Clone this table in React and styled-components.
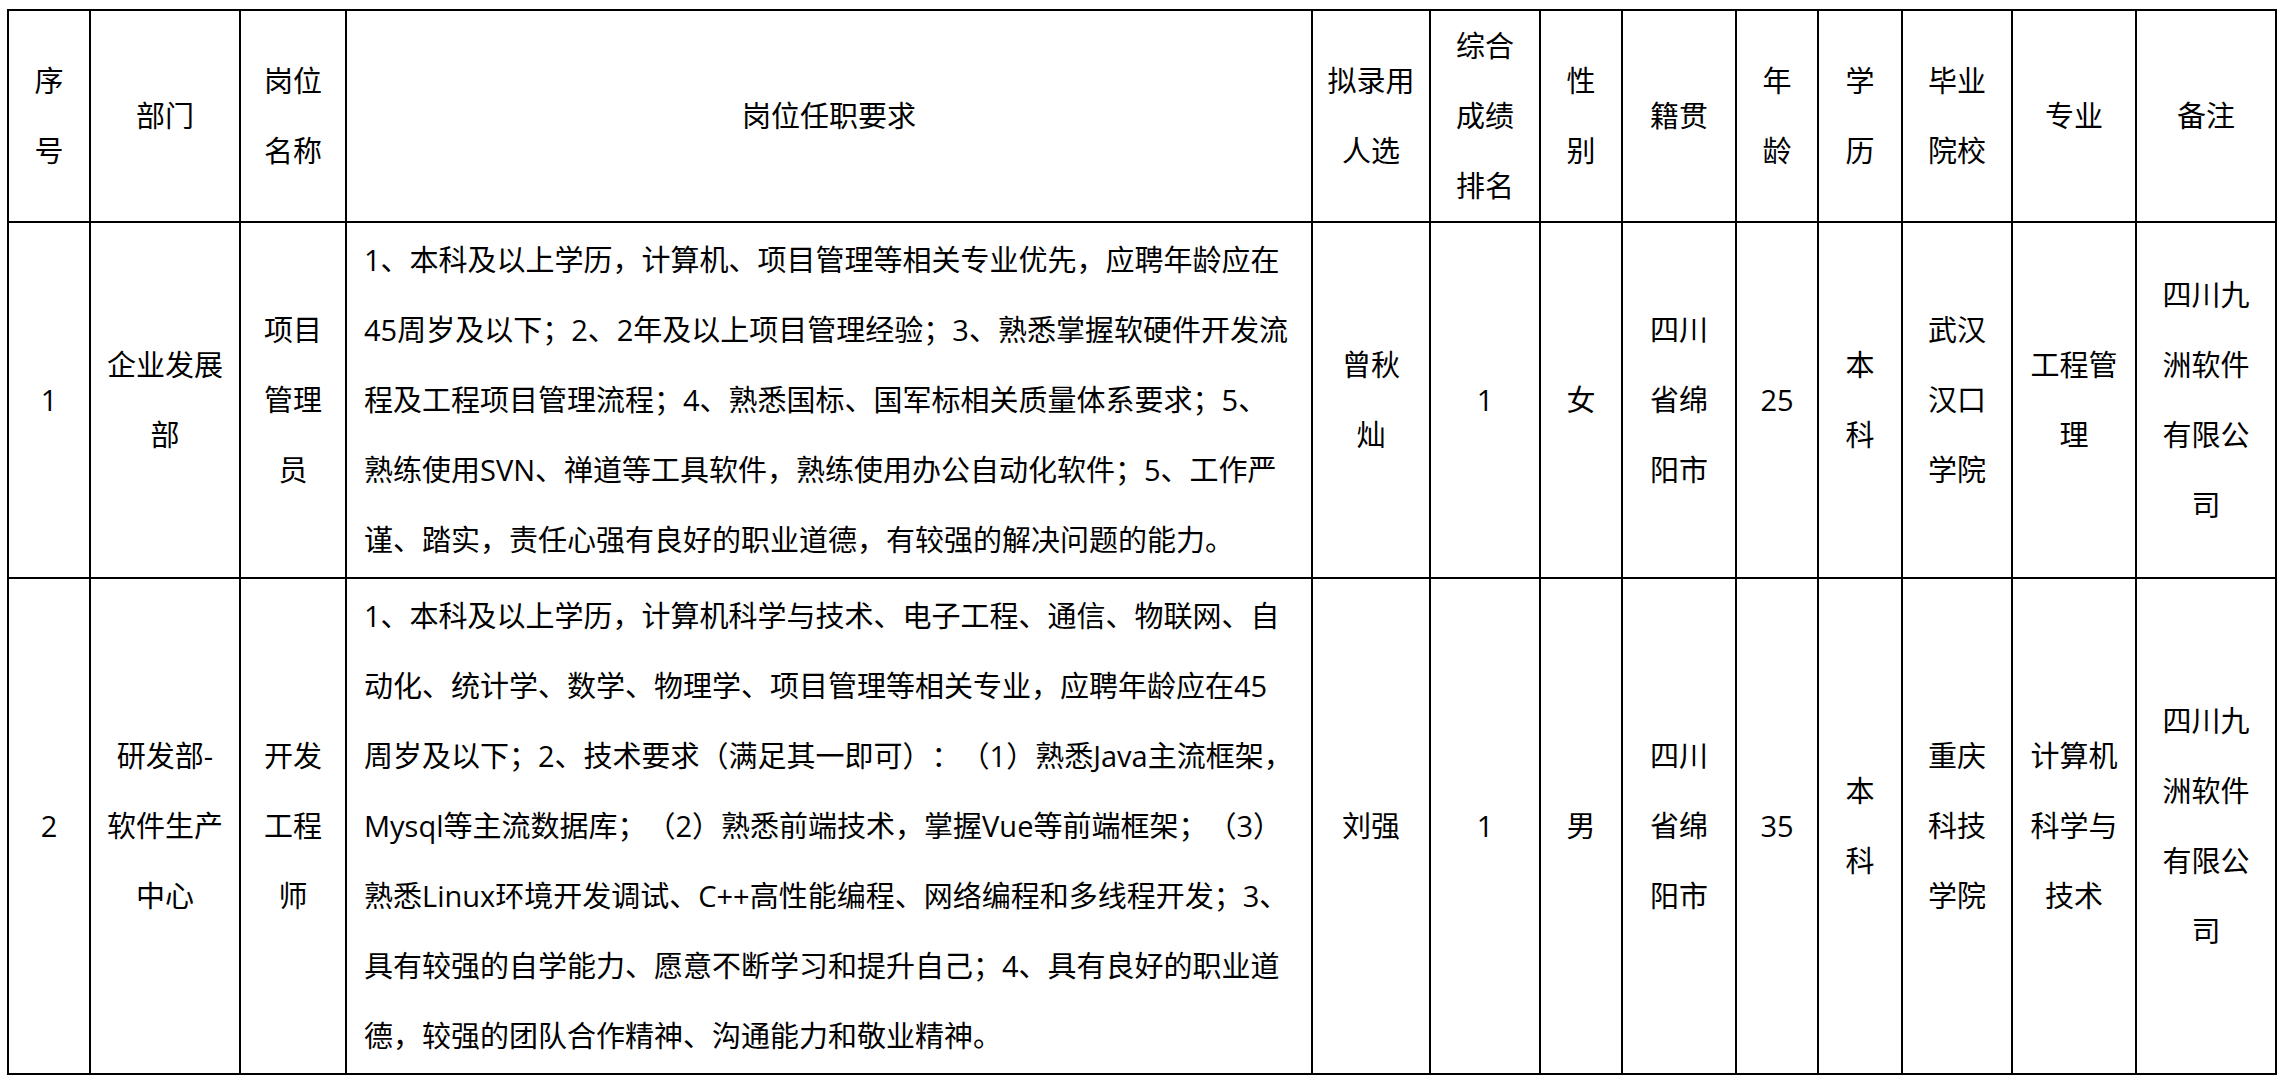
import React from "react";
import styled, { createGlobalStyle } from "styled-components";

const GlobalStyle = createGlobalStyle`
  html, body {
    margin: 0;
    padding: 0;
    background: #ffffff;
  }
  body {
    font-family: "Open Sans", "Noto Sans CJK SC", sans-serif;
    color: #000000;
    text-spacing-trim: space-all;
  }
`;

const Page = styled.div`
  padding: 9px 0 0 7px;
`;

const Table = styled.table`
  border-collapse: collapse;
  table-layout: fixed;
  width: 2268px;
  font-size: 29px;
  line-height: 70px;
  color: #000;
  text-spacing-trim: space-all;
`;

const Col = styled.col`
  width: ${(p) => p.$w}px;
`;

const Row = styled.tr`
  height: ${(p) => p.$h}px;
`;

const HeadCell = styled.th`
  border: 2px solid #000;
  padding: 0 6px;
  font-weight: 400;
  text-align: center;
  vertical-align: middle;
`;

const Cell = styled.td`
  border: 2px solid #000;
  padding: 0 6px;
  text-align: center;
  vertical-align: middle;
`;

const ReqCell = styled.td`
  border: 2px solid #000;
  padding: 0 10px 0 17px;
  text-align: left;
  vertical-align: middle;
`;

const Line = styled.span`
  display: block;
  white-space: nowrap;
  text-spacing-trim: space-all;
`;

const widths = [82, 150, 106, 966, 118, 110, 82, 114, 82, 84, 110, 124, 140];

const headers = [
  ["序", "号"],
  ["部门"],
  ["岗位", "名称"],
  ["岗位任职要求"],
  ["拟录用", "人选"],
  ["综合", "成绩", "排名"],
  ["性", "别"],
  ["籍贯"],
  ["年", "龄"],
  ["学", "历"],
  ["毕业", "院校"],
  ["专业"],
  ["备注"],
];

const rows = [
  {
    h: 356,
    before: [["1"], ["企业发展", "部"], ["项目", "管理", "员"]],
    req: [
      "1、本科及以上学历，计算机、项目管理等相关专业优先，应聘年龄应在",
      "45周岁及以下；2、2年及以上项目管理经验；3、熟悉掌握软硬件开发流",
      "程及工程项目管理流程；4、熟悉国标、国军标相关质量体系要求；5、",
      "熟练使用SVN、禅道等工具软件，熟练使用办公自动化软件；5、工作严",
      "谨、踏实，责任心强有良好的职业道德，有较强的解决问题的能力。",
    ],
    after: [
      ["曾秋", "灿"],
      ["1"],
      ["女"],
      ["四川", "省绵", "阳市"],
      ["25"],
      ["本", "科"],
      ["武汉", "汉口", "学院"],
      ["工程管", "理"],
      ["四川九", "洲软件", "有限公", "司"],
    ],
  },
  {
    h: 496,
    before: [["2"], ["研发部-", "软件生产", "中心"], ["开发", "工程", "师"]],
    req: [
      "1、本科及以上学历，计算机科学与技术、电子工程、通信、物联网、自",
      "动化、统计学、数学、物理学、项目管理等相关专业，应聘年龄应在45",
      "周岁及以下；2、技术要求（满足其一即可）：（1）熟悉Java主流框架，",
      "Mysql等主流数据库；（2）熟悉前端技术，掌握Vue等前端框架；（3）",
      "熟悉Linux环境开发调试、C++高性能编程、网络编程和多线程开发；3、",
      "具有较强的自学能力、愿意不断学习和提升自己；4、具有良好的职业道",
      "德，较强的团队合作精神、沟通能力和敬业精神。",
    ],
    after: [
      ["刘强"],
      ["1"],
      ["男"],
      ["四川", "省绵", "阳市"],
      ["35"],
      ["本", "科"],
      ["重庆", "科技", "学院"],
      ["计算机", "科学与", "技术"],
      ["四川九", "洲软件", "有限公", "司"],
    ],
  },
];

const Lines = ({ lines }) =>
  lines.map((l, i) => <Line key={i}>{l}</Line>);

export default function App() {
  return (
    <Page>
      <GlobalStyle />
      <Table>
        <colgroup>
          {widths.map((w, i) => (
            <Col key={i} $w={w} />
          ))}
        </colgroup>
        <thead>
          <Row $h={212}>
            {headers.map((h, i) => (
              <HeadCell key={i}>
                <Lines lines={h} />
              </HeadCell>
            ))}
          </Row>
        </thead>
        <tbody>
          {rows.map((r, ri) => (
            <Row key={ri} $h={r.h}>
              {r.before.map((c, i) => (
                <Cell key={"b" + i}>
                  <Lines lines={c} />
                </Cell>
              ))}
              <ReqCell>
                <Lines lines={r.req} />
              </ReqCell>
              {r.after.map((c, i) => (
                <Cell key={"a" + i}>
                  <Lines lines={c} />
                </Cell>
              ))}
            </Row>
          ))}
        </tbody>
      </Table>
    </Page>
  );
}
